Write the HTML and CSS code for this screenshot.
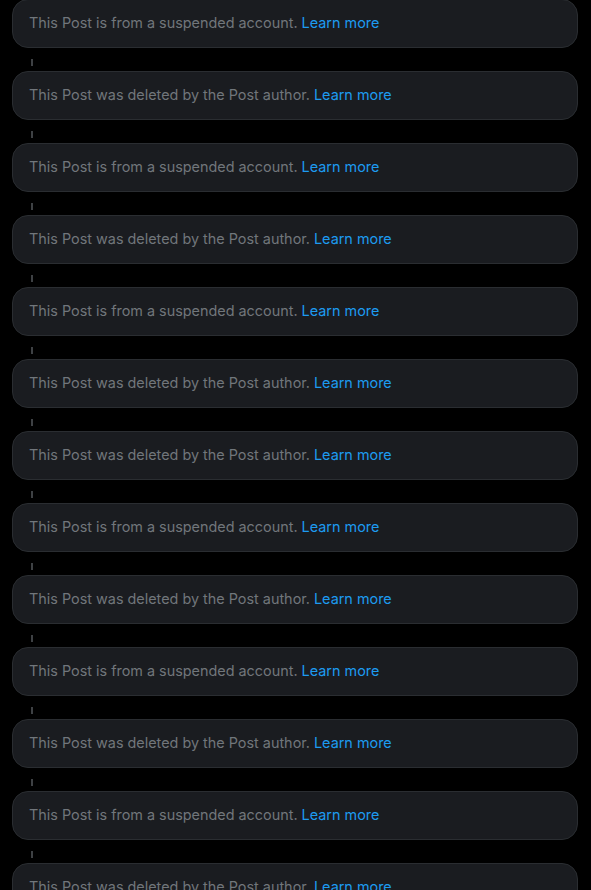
FILE: index.html
```html
<!DOCTYPE html>
<html lang="en">
<head>
<meta charset="utf-8">
<link rel="stylesheet" href="styles.css">
</head>
<body>
<div class="thread">
  <div class="post">This Post is from a suspended account. <a href="#" class="link">Learn more</a></div>
  <div class="connector"></div>
  <div class="post">This Post was deleted by the Post author. <a href="#" class="link">Learn more</a></div>
  <div class="connector"></div>
  <div class="post">This Post is from a suspended account. <a href="#" class="link">Learn more</a></div>
  <div class="connector"></div>
  <div class="post">This Post was deleted by the Post author. <a href="#" class="link">Learn more</a></div>
  <div class="connector"></div>
  <div class="post">This Post is from a suspended account. <a href="#" class="link">Learn more</a></div>
  <div class="connector"></div>
  <div class="post">This Post was deleted by the Post author. <a href="#" class="link">Learn more</a></div>
  <div class="connector"></div>
  <div class="post">This Post was deleted by the Post author. <a href="#" class="link">Learn more</a></div>
  <div class="connector"></div>
  <div class="post">This Post is from a suspended account. <a href="#" class="link">Learn more</a></div>
  <div class="connector"></div>
  <div class="post">This Post was deleted by the Post author. <a href="#" class="link">Learn more</a></div>
  <div class="connector"></div>
  <div class="post">This Post is from a suspended account. <a href="#" class="link">Learn more</a></div>
  <div class="connector"></div>
  <div class="post">This Post was deleted by the Post author. <a href="#" class="link">Learn more</a></div>
  <div class="connector"></div>
  <div class="post">This Post is from a suspended account. <a href="#" class="link">Learn more</a></div>
  <div class="connector"></div>
  <div class="post">This Post was deleted by the Post author. <a href="#" class="link">Learn more</a></div>
</div>
</body>
</html>
```
FILE: styles.css
```css
html, body {
  margin: 0;
  padding: 0;
  background: #000;
  overflow: hidden;
}
body {
  font-family: Inter, "Noto Sans", sans-serif;
  font-size: 14.4px;
}
.thread {
  display: flex;
  flex-direction: column;
  padding: 0 13px 0 12px;
  margin-top: -1px;
}
.post {
  background: #1a1c20;
  border: 1px solid #2a2d31;
  border-radius: 16px;
  padding: 11px 16px 13px;
  line-height: 23px;
  color: #71767b;
  white-space: nowrap;
}
.link {
  color: #1d9bf0;
  text-decoration: none;
}
.connector {
  width: 2px;
  height: 7px;
  background: #3e4144;
  margin: 11px 0 5px 19px;
}
```
